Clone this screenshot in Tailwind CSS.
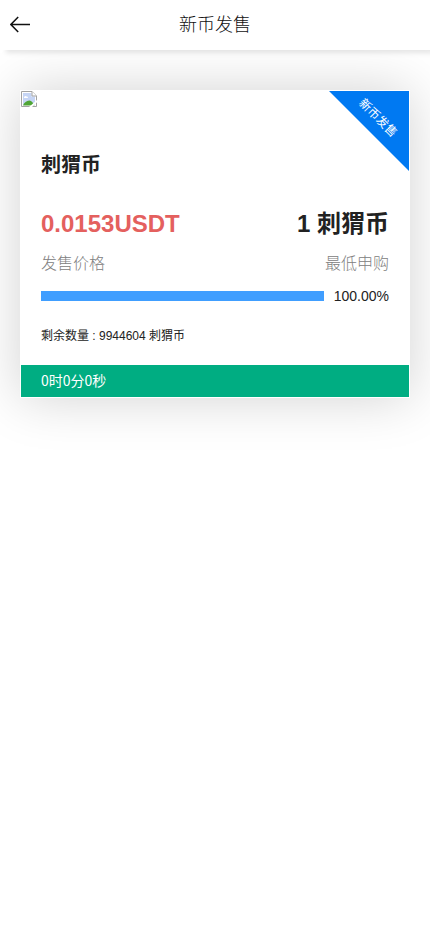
<!DOCTYPE html>
<html lang="zh-CN">
<head>
<meta charset="utf-8">
<meta name="viewport" content="width=device-width, initial-scale=1">
<title>新币发售</title>
<script src="https://cdn.jsdelivr.net/npm/@tailwindcss/browser@4"></script>
</head>
<body class="min-h-screen overflow-x-hidden bg-white font-['Liberation_Sans','Noto_Sans_CJK_SC',sans-serif] text-[#222]">
<header class="relative z-10 grid h-[50px] grid-cols-[40px_1fr_40px] items-center bg-white shadow-[6px_3px_5px_rgba(0,0,0,0.1)]">
  <svg class="ml-[10px] h-5 w-5" viewBox="0 0 20 20" fill="none" stroke="#111" stroke-width="1.5"><path d="M20 9.5H1M8.2 2L.9 9.5L8.2 17"/></svg>
  <h1 class="text-center text-[18px] font-light leading-[50px] text-[#111]">新币发售</h1>
</header>
<main class="px-5 pt-10">
  <section class="relative border border-white bg-white shadow-[0_0_50px_rgba(0,0,0,0.18)]">
    <svg class="block h-4 w-4" viewBox="0 0 16 16">
      <path d="M.5 .5H11L15.5 5V15.5H.5Z" fill="#fff" stroke="#a3a3a3"/>
      <path d="M2 2H10.5V5.5H14V14H2Z" fill="#c6d5f5"/>
      <path d="M3 6.5C3 5 5 4.5 5.5 5.5C7 5 7.5 7 6.5 7H3Z" fill="#fff"/>
      <path d="M2 14.5C3 11.5 6 9.3 8.5 9.5C10.5 9.7 12.5 12 13.5 14.5Z" fill="#4fa535"/>
      <path d="M11 .5V5H15.5" fill="#fff" stroke="#a3a3a3"/>
      <path d="M8 16L16 9V11.2L11 16Z" fill="#fff"/>
    </svg>
    <div class="absolute right-0 top-0 h-20 w-20 bg-[#0079f2] [clip-path:polygon(0_0,100%_0,100%_100%)]">
      <span class="absolute left-[23px] top-[18px] w-[52px] rotate-45 text-center text-[12px] leading-[18px] text-white">新币发售</span>
    </div>
    <div class="px-5">
      <h2 class="mt-[43px] text-[20px] font-bold leading-[30px]">刺猬币</h2>
      <div class="mt-[26px] flex justify-between text-[24px] font-bold leading-[36px]">
        <span class="text-[#e4605e]">0.0153USDT</span>
        <span>1 刺猬币</span>
      </div>
      <div class="mt-[10px] flex justify-between text-[16px] font-light leading-[24px] text-[#808080]">
        <span>发售价格</span><span>最低申购</span>
      </div>
      <div class="mt-[10px] flex items-center justify-between text-[14px] leading-[20px]">
        <div class="h-[10px] w-[283px] bg-[#409eff]"></div>
        <span>100.00%</span>
      </div>
      <p class="mt-[21px] text-[12px] leading-[18px]">剩余数量 : 9944604 刺猬币</p>
    </div>
    <div class="mt-[20px] h-8 bg-[#00ad82] px-5 font-['Noto_Sans_CJK_SC',sans-serif] text-[14px] leading-[30px] text-white">0时0分0秒</div>
  </section>
</main>
</body>
</html>
